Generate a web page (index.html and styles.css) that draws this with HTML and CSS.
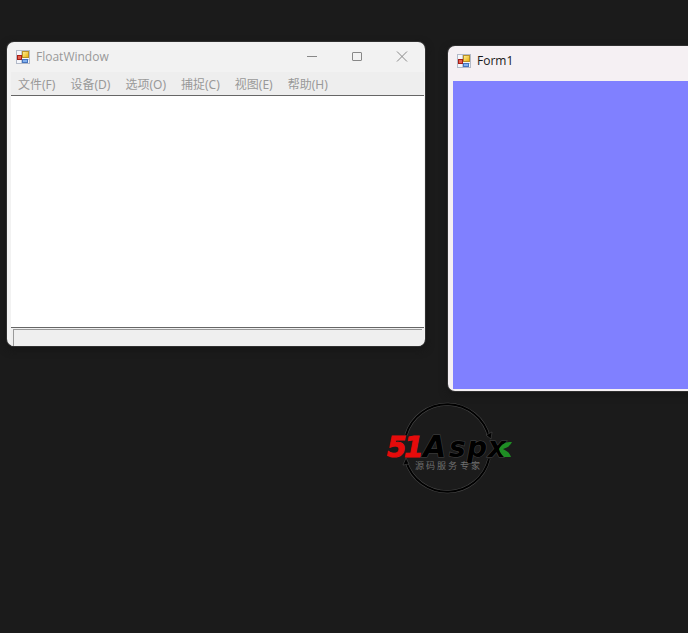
FILE: index.html
```html
<!DOCTYPE html>
<html lang="zh-CN">
<head>
<meta charset="utf-8">
<title>FloatWindow</title>
<link rel="stylesheet" href="styles.css">
</head>
<body>
<svg class="defs" aria-hidden="true">
  <defs>
    <linearGradient id="gold" x1="0" y1="0" x2="1" y2="1"><stop offset="0" stop-color="#fff0a0"/><stop offset="1" stop-color="#e9b000"/></linearGradient>
    <symbol id="form-icon" viewBox="0 0 14 14">
      <rect x="0.5" y="0.5" width="13" height="13" fill="#f4f6fb" stroke="#b3bac8"/>
      <path d="M5.5 1v12M1 9.5h12" stroke="#c3cad8" fill="none"/>
      <rect x="6.5" y="1.5" width="6" height="6" fill="url(#gold)" stroke="#b8902a"/>
      <rect x="1.5" y="5.5" width="4" height="4" fill="#e8604e" stroke="#a41e18"/>
      <rect x="6.5" y="9.5" width="5" height="3" fill="#82b0ee" stroke="#4674bd"/>
    </symbol>
  </defs>
</svg>
<main class="desktop">
  <section class="window float-window">
    <header class="titlebar">
      <svg class="app-icon" aria-hidden="true"><use href="#form-icon"/></svg>
      <h1 class="title">FloatWindow</h1>
      <div class="controls">
        <button type="button" aria-label="最小化"><svg viewBox="0 0 12 12"><path d="M1 5.5h10"/></svg></button>
        <button type="button" aria-label="最大化"><svg viewBox="0 0 12 12"><rect x="1.5" y="1.5" width="9" height="8" rx="0.5"/></svg></button>
        <button type="button" aria-label="关闭"><svg viewBox="0 0 12 12"><path d="M1 0.500l10 10M11 0.500L1 10.500"/></svg></button>
      </div>
    </header>
    <nav class="menubar">
      <button type="button">文件(F)</button>
      <button type="button">设备(D)</button>
      <button type="button">选项(O)</button>
      <button type="button">捕捉(C)</button>
      <button type="button">视图(E)</button>
      <button type="button">帮助(H)</button>
    </nav>
    <div class="preview"></div>
    <footer class="statusbar"><div class="status-panel"></div></footer>
  </section>

  <section class="window form-window">
    <header class="titlebar">
      <svg class="app-icon" aria-hidden="true"><use href="#form-icon"/></svg>
      <h2 class="title">Form1</h2>
    </header>
    <div class="form-body"></div>
  </section>

  <svg class="logo" viewBox="0 0 130 96" role="img" aria-label="51Aspx 源码服务专家">
    <g class="halo">
      <path d="M22 35A43 43 0 0 1 105 37"/>
      <path d="M22 61A43 43 0 0 0 105 59"/>
    </g>
    <g class="ring">
      <path d="M22 35A43 43 0 0 1 105 37"/>
      <path d="M22 61A43 43 0 0 0 105 59"/>
    </g>
    <path class="tip" d="M102 35l5 4 1-7zM19 65l3-7 3 6z"/>
    <text class="num" x="3" y="57">5</text>
    <text class="num" x="20" y="57">1</text>
    <text class="word cap" x="39" y="57">A</text>
    <text class="word" x="65" y="57">s</text>
    <text class="word" x="83" y="57">p</text>
    <text class="word" x="104" y="57">x</text>
    <path class="leaf" d="M115 49C118 44 121 42 128 42C126 46 123 48 119 49C123 51 126 53 127 57H120C118 55 116 53 115 49z"/>
    <text class="tagline"><tspan x="31" y="69">源</tspan><tspan x="42">码</tspan><tspan x="53">服</tspan><tspan x="64">务</tspan><tspan x="76">专</tspan><tspan x="87">家</tspan></text>
  </svg>
</main>
</body>
</html>
```
FILE: styles.css
```css
* {
  box-sizing: border-box;
}

body {
  margin: 0;
  background: #1b1b1b;
  font: 12px/16px "Noto Sans", "Noto Sans CJK SC", sans-serif;
}

.defs {
  position: absolute;
  width: 0;
  height: 0;
}

.desktop {
  position: relative;
  min-height: 100vh;
  overflow: hidden;
}

.window {
  position: absolute;
  display: flex;
  flex-direction: column;
  border-radius: 7px;
  overflow: hidden;
  box-shadow: 0 0 0 1px #303030, 0 3px 9px #151515;
}

.float-window {
  left: 7px;
  top: 42px;
  width: 418px;
  height: 304px;
  padding: 0 1px 0 4px;
  background: #f2f2f2;
  color: #999;
}

.form-window {
  left: 448px;
  right: -20px;
  top: 46px;
  height: 345px;
  padding: 0 5px 2px;
  background: #f5f0f3;
  color: #191919;
}

.titlebar {
  display: flex;
  align-items: center;
  gap: 6px;
  height: 30px;
  padding-left: 5px;
}

.form-window .titlebar {
  height: 35px;
  padding: 0 0 6px 4px;
}

.app-icon {
  width: 14px;
  height: 14px;
}

.title {
  margin: 0;
  font: 12px/16px "Open Sans", "Noto Sans", sans-serif;
}

.controls {
  display: flex;
  margin-left: auto;
}

.controls button {
  display: flex;
  align-items: center;
  justify-content: center;
  width: 45px;
  height: 30px;
  padding: 0;
  border: 0;
  background: none;
}

.controls svg {
  width: 12px;
  height: 12px;
  fill: none;
  stroke: #888;
}

.menubar {
  display: flex;
  gap: 1px;
  height: 23px;
  background: #eee;
}

.menubar button {
  padding: 3px 7px 0;
  border: 0;
  background: none;
  color: inherit;
  font: inherit;
}

.preview {
  flex: 1;
  border: solid #666;
  border-width: 1px 0;
  background: #fff;
}

.statusbar {
  height: 18px;
  padding: 1px 2px 0;
  background: #efefef;
}

.status-panel {
  height: 100%;
  border: solid #999;
  border-width: 1px 0 0 1px;
}

.form-body {
  flex: 1;
  background: #8080ff;
}

.logo {
  position: absolute;
  left: 384px;
  top: 400px;
  width: 130px;
  height: 96px;
}

.halo {
  fill: none;
  stroke: #4a4a4a;
  stroke-width: 3;
}

.ring {
  fill: none;
  stroke: #000;
  stroke-width: 2;
}

.tip {
  fill: #000;
  stroke: #555;
  stroke-width: 0.5;
}

.num,
.word {
  font: italic bold 28px "DejaVu Sans", sans-serif;
}

.num {
  fill: #e60b0b;
  stroke: #e60b0b;
  stroke-width: 1;
}

.word {
  fill: #000;
  stroke: #444;
  stroke-width: 1;
  paint-order: stroke;
}

.cap {
  font-size: 30px;
}

.leaf {
  fill: #1f8d24;
}

.tagline {
  font: 9px "Noto Sans CJK SC", sans-serif;
  fill: #707070;
}
```
